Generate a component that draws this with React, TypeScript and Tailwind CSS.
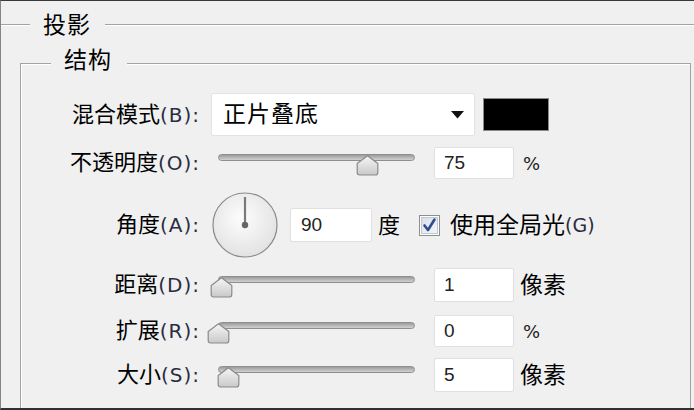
import React from "react";

function Etch({ className }: { className: string }) {
  return <div className={"h-[2px] border-t border-[#a3a3a3] bg-white " + className} />;
}

function Label({ cjk, latin }: { cjk: string; latin: string }) {
  return (
    <div className="w-[179px] shrink-0 text-right text-[22px] leading-[24px] text-black">
      {cjk}
      <span className="font-['DejaVu_Sans',sans-serif] text-[20px] tracking-[1px] text-[#2a2d40]">{latin}</span>
    </div>
  );
}

function Slider({ thumb }: { thumb: number }) {
  return (
    <div className="relative ml-[7px] w-[211px] h-[20px] shrink-0">
      <div className="absolute left-[11px] right-[3px] top-[1px] h-[7px] rounded-full border border-[#8e8e8e] bg-linear-to-b from-[#9c9c9c] to-[#d2d2d2]" />
      <svg className="absolute top-[2px]" style={{ left: thumb }} width="23" height="21" viewBox="0 0 23 21">
        <defs>
          <linearGradient id="tg" x1="0" y1="0" x2="0" y2="1">
            <stop offset="0" stopColor="#f6f6f6" />
            <stop offset="1" stopColor="#c9c9c9" />
          </linearGradient>
        </defs>
        <path
          d="M11.5 0.8 L21.8 8.5 L21.8 17.5 Q21.8 20 19.3 20 L3.7 20 Q1.2 20 1.2 17.5 L1.2 8.5 Z"
          fill="url(#tg)"
          stroke="#8a8a8a"
          strokeWidth="1.2"
          strokeLinejoin="round"
        />
      </svg>
    </div>
  );
}

function NumBox({ value, tall }: { value: string; tall: boolean }) {
  return (
    <div
      className={
        "ml-[16px] w-[80px] shrink-0 bg-white border border-[#e0e0e0] rounded-[2px] pl-[9px] flex items-center text-[19px] text-[#222] " +
        (tall ? "h-[34px]" : "h-[32px]")
      }
    >
      {value}
    </div>
  );
}

export default function App() {
  return (
    <div className="w-[694px] h-[410px] box-border overflow-hidden bg-[#f0f0f0] border-t border-t-[#3a3a3a] border-l border-l-[#858585] border-b-2 border-b-[#2e332f] font-['Liberation_Sans','Noto_Sans_CJK_SC',sans-serif] text-black flex flex-col">
      <div className="flex items-center h-[22px] mt-[13px]">
        <Etch className="w-[29px]" />
        <div className="ml-[13px] mr-[14px] text-[23px] leading-[22px] tracking-[1px]">投影</div>
        <Etch className="flex-1" />
      </div>

      <div className="ml-[19px] w-[671px] mt-[27px] flex-1 border-l border-r border-[#a3a3a3] shadow-[inset_1px_0_0_#fff]">
        <div className="flex items-start">
          <Etch className="w-[30px]" />
          <div className="-mt-[15px] ml-[13px] mr-[15px] text-[23px] leading-[24px] tracking-[1px]">结构</div>
          <Etch className="flex-1" />
        </div>

        {/* row 1 */}
        <div className="flex items-center mt-[21px] h-[43px]">
          <Label cjk="混合模式" latin="(B):" />
          <div className="ml-[11px] w-[264px] h-[43px] shrink-0 bg-white border border-[#e2e2e2] rounded-[2px] flex items-center pl-[11px] pr-[10px]">
            <span className="flex-1 text-[23px] tracking-[1px]">正片叠底</span>
            <svg width="13" height="8" viewBox="0 0 13 8">
              <path d="M0 0 H13 L6.5 7.5 Z" fill="#111" />
            </svg>
          </div>
          <div className="ml-[8px] w-[66px] h-[33px] bg-black border border-[#8a8a8a]" />
        </div>

        {/* row 2 */}
        <div className="flex items-center mt-[11px] h-[32px]">
          <Label cjk="不透明度" latin="(O):" />
          <Slider thumb={149} />
          <NumBox value="75" tall={false} />
          <span className="ml-[9px] font-['DejaVu_Sans',sans-serif] text-[18px] text-[#222]">%</span>
        </div>

        {/* row 3 */}
        <div className="flex items-center mt-[13px] h-[66px]">
          <Label cjk="角度" latin="(A):" />
          <svg className="ml-[12px] shrink-0" width="66" height="66" viewBox="0 0 66 66">
            <defs>
              <radialGradient id="dg" cx="45%" cy="40%" r="65%">
                <stop offset="0" stopColor="#fdfdfd" />
                <stop offset="1" stopColor="#e0e0e0" />
              </radialGradient>
            </defs>
            <circle cx="33" cy="33" r="32" fill="url(#dg)" stroke="#8a8a8a" strokeWidth="1.2" />
            <line x1="33" y1="33" x2="33" y2="5" stroke="#7a7a7a" strokeWidth="2.2" />
            <circle cx="33" cy="33" r="3.2" fill="#666" />
          </svg>
          <div className="ml-[12px] w-[82px] h-[34px] shrink-0 bg-white border border-[#e0e0e0] rounded-[2px] pl-[10px] flex items-center text-[19px] text-[#222]">
            90
          </div>
          <span className="ml-[6px] text-[22px]">度</span>
          <svg className="ml-[19px] shrink-0" width="21" height="21" viewBox="0 0 21 21">
            <defs>
              <linearGradient id="cg" x1="0" y1="0" x2="1" y2="1">
                <stop offset="0" stopColor="#d9dee6" />
                <stop offset="1" stopColor="#f5f6f8" />
              </linearGradient>
            </defs>
            <rect x="0.5" y="0.5" width="20" height="20" fill="#fff" stroke="#8e8f8f" />
            <rect x="2.5" y="2.5" width="16" height="16" fill="url(#cg)" stroke="#c3c8d0" />
            <path d="M5.5 10.5 L9 15 L15.5 4.5" fill="none" stroke="#2e4c90" strokeWidth="2.6" strokeLinecap="round" strokeLinejoin="round" />
          </svg>
          <span className="ml-[10px] text-[23px]">使用全局光</span>
          <span className="font-['DejaVu_Sans',sans-serif] text-[19px] text-[#2a2d40]">(G)</span>
        </div>

        {/* row 4 */}
        <div className="flex items-center mt-[10px] h-[34px]">
          <Label cjk="距离" latin="(D):" />
          <Slider thumb={3} />
          <NumBox value="1" tall={true} />
          <span className="ml-[6px] text-[23px]">像素</span>
        </div>

        {/* row 5 */}
        <div className="flex items-center mt-[13px] h-[32px]">
          <Label cjk="扩展" latin="(R):" />
          <Slider thumb={0} />
          <NumBox value="0" tall={false} />
          <span className="ml-[9px] font-['DejaVu_Sans',sans-serif] text-[18px] text-[#222]">%</span>
        </div>

        {/* row 6 */}
        <div className="flex items-center mt-[11px] h-[34px]">
          <Label cjk="大小" latin="(S):" />
          <Slider thumb={10} />
          <NumBox value="5" tall={true} />
          <span className="ml-[6px] text-[23px]">像素</span>
        </div>
      </div>
    </div>
  );
}
